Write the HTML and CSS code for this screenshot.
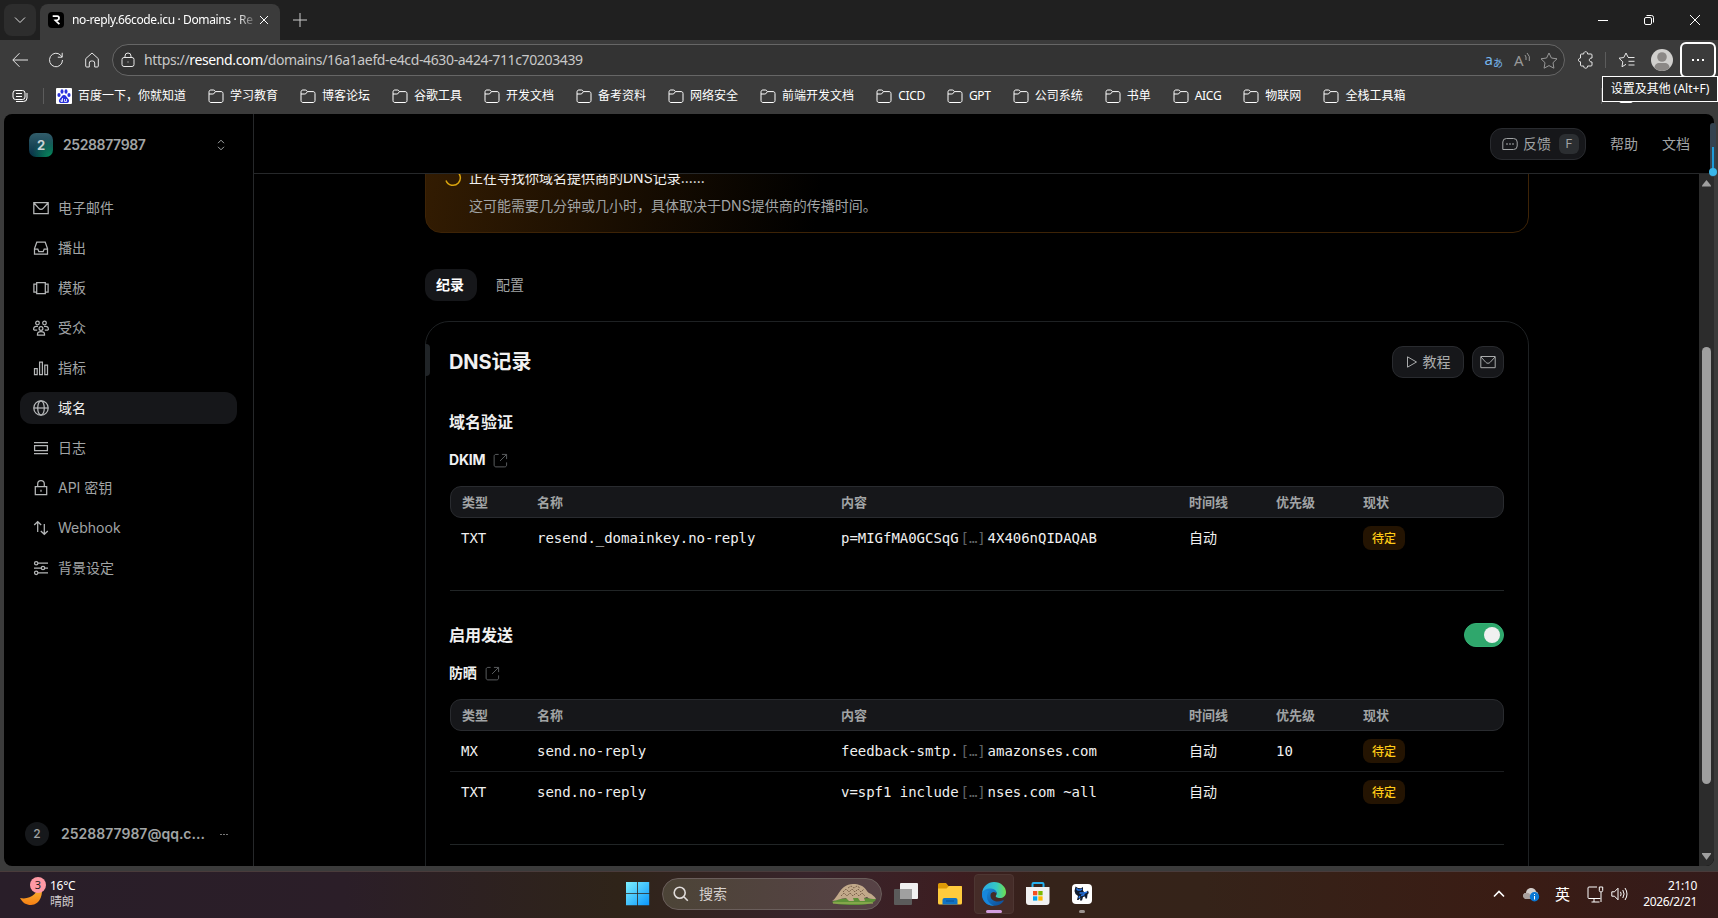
FILE: index.html
```html
<!DOCTYPE html>
<html lang="zh-CN">
<head>
    <meta charset="UTF-8">
    <meta name="viewport" content="width=device-width, initial-scale=1.0">
    <title>no-reply.66code.icu · Domains · Resend</title>
    <link rel="stylesheet" href="styles.css">
</head>
<body>
    <svg class="defs" width="0" height="0">
        <symbol id="folder" viewBox="0 0 16 16"><path d="M1 4.200C1 2.700 1.800 2 3 2h2.400c.8 0 1.200.4 1.600 1l.4.6H13c1.300 0 2 .8 2 2V12.500c0 1.200-.8 2-2 2H3c-1.200 0-2-.8-2-2zM1 6h3.800c.8 0 1.200-.3 1.600-.9l.9-1.400"/></symbol>
        <symbol id="mail" viewBox="0 0 16 16"><path d="M.8 2.500h14.400v11.200H.8zM1 3l4.800 5.300c1.200 1.300 3.200 1.300 4.400 0L15 3"/></symbol>
        <symbol id="external" viewBox="0 0 16 16"><path d="M6 1.500H3.200C2 1.500 1.200 2.300 1.200 3.500v9.300c0 1.200.8 2 2 2h9.300c1.200 0 2-.8 2-2V10M9.500 1.500h5v5M14.300 1.700L7.500 8.500"/></symbol>
    </svg>

    <!-- Browser -->
    <div class="browser">
        <div class="titlebar">
            <div class="tab-menu"><svg width="12" height="12" viewBox="0 0 12 12"><path d="M1 3.500l5 5 5-5"/></svg></div>
            <div class="tab">
                <svg class="favicon" width="16" height="16" viewBox="0 0 16 16"><rect width="16" height="16" rx="4"/><path d="M4.700 4.200h4.500c2.300 0 2.500 3.500.2 3.900l-2 .3 4 3.800"/></svg>
                <span class="tab-title">no-reply.66code.icu · Domains · Re</span>
                <svg width="10" height="10" viewBox="0 0 10 10"><path d="M1 1l8 8M9 1L1 9"/></svg>
            </div>
            <svg class="new-tab" width="14" height="14" viewBox="0 0 14 14"><path d="M7 0v14M0 7h14"/></svg>
            <div class="window-buttons">
                <svg width="10" height="10" viewBox="0 0 10 10"><path d="M0 5.500h10"/></svg>
                <svg width="10" height="10" viewBox="0 0 10 10"><rect x=".5" y="2.500" width="7" height="7" rx="1.500"/><path d="M2.500.5H7.500q2 0 2 2V7.500"/></svg>
                <svg width="10" height="10" viewBox="0 0 10 10"><path d="M0 0l10 10M10 0L0 10"/></svg>
            </div>
        </div>

        <div class="toolbar">
            <svg class="nav-icon" width="16" height="16" viewBox="0 0 16 16"><path d="M16 8H1M7.500 1.200L.8 8l6.700 6.800"/></svg>
            <svg class="nav-icon" width="16" height="16" viewBox="0 0 16 16"><path d="M14.500 8A6.500 6.800 0 1 1 12.600 3.200L14 5M14.200.8V5.200H9.800"/></svg>
            <svg class="nav-icon" width="16" height="16" viewBox="0 0 16 16"><path d="M1.700 6.700L8 1l6.300 5.700V14q0 1-1 1h-2.600v-4q0-2-2-2H7.300q-2 0-2 2v4H2.700q-1 0-1-1z"/></svg>
            <div class="address">
                <svg width="14" height="16" viewBox="0 0 14 16"><rect x="1" y="5.500" width="12" height="9" rx="2"/><path d="M4 5.500V4a3 3 0 0 1 6 0v1.500M7 9.500v1"/></svg>
                <span class="url">https://<b>resend.com</b>/domains/16a1aefd-e4cd-4630-a424-711c70203439</span>
                <span class="translate">a<small>あ</small></span>
                <span class="read-aloud">A<svg width="7" height="10" viewBox="0 0 7 10"><path d="M1 3q1.500 1.500 1 5M3 1q3.500 3 2.300 8"/></svg></span>
                <svg class="star" width="18" height="17" viewBox="0 0 18 17"><path d="M9 1l2.400 5 5.600.8-4 3.900.9 5.500L9 13.600l-4.900 2.600.9-5.500-4-3.900L6.600 6z"/></svg>
            </div>
            <svg class="puzzle" width="16" height="18" viewBox="0 0 16 18"><path d="M3.500 3h2.200C5.300-.1 10 -.1 9.600 3H13q1 0 1 1v3c-3.600-.3-3.600 4.300 0 4v3q0 1-1 1H9.600c.4 3-4.300 3-3.900 0H3.500q-1 0-1-1v-3.200C-.3 11-.3 7.300 2.500 7V4q0-1 1-1z"/></svg>
            <i class="divider"></i>
            <svg class="fav-list" width="17" height="16" viewBox="0 0 17 16"><path d="M8 12.300l-4 2.500.8-5L1 6.200l4.800-.7L8 1l2 4M10 5.500h6.500M10.500 9.300h6M10.500 13h6"/></svg>
            <svg class="profile" width="22" height="22" viewBox="0 0 22 22"><circle cx="11" cy="11" r="11" fill="#d0cfcd"/><circle cx="11" cy="8" r="4.800" fill="#8b8886"/><path d="M3.500 19c0-3.500 2-5 5-5h5c3 0 5 1.500 5 5a11 11 0 0 1-15 0z" fill="#8b8886"/></svg>
            <div class="more"><i></i><i></i><i></i>
                <div class="tooltip">设置及其他 (Alt+F)</div>
            </div>
        </div>

        <div class="bookmarks">
            <svg class="workspaces" width="16" height="14" viewBox="0 0 16 14"><rect x="1" y="1.500" width="12" height="9" rx="2.500"/><path d="M4 4.500h6M4 7.500h6M15 4v5q0 3.500-3.500 3.500H4"/></svg>
            <i class="divider"></i>
            <a class="bookmark"><svg class="baidu" width="16" height="16" viewBox="0 0 16 16"><rect width="16" height="16" rx="1" fill="#fff"/><g fill="#2a32dc"><ellipse cx="3" cy="7" rx="1.600" ry="2.100"/><ellipse cx="6" cy="3.500" rx="1.500" ry="2.200"/><ellipse cx="10" cy="3.500" rx="1.500" ry="2.200"/><ellipse cx="13" cy="7" rx="1.600" ry="2.100"/><path d="M8 7c2 0 2.500 2 4.200 3.700 1.800 2 .6 4.300-1.500 4.300H5.300c-2.100 0-3.300-2.300-1.500-4.300C5.500 9 6 7 8 7z"/></g><path d="M6.500 10v3.500H5V12h1.500M8.500 11v2.500h2V11" fill="none" stroke="#fff" stroke-width=".8"/></svg>百度一下，你就知道</a>
            <a class="bookmark"><svg><use href="#folder"/></svg>学习教育</a>
            <a class="bookmark"><svg><use href="#folder"/></svg>博客论坛</a>
            <a class="bookmark"><svg><use href="#folder"/></svg>谷歌工具</a>
            <a class="bookmark"><svg><use href="#folder"/></svg>开发文档</a>
            <a class="bookmark"><svg><use href="#folder"/></svg>备考资料</a>
            <a class="bookmark"><svg><use href="#folder"/></svg>网络安全</a>
            <a class="bookmark"><svg><use href="#folder"/></svg>前端开发文档</a>
            <a class="bookmark latin"><svg><use href="#folder"/></svg>CICD</a>
            <a class="bookmark latin"><svg><use href="#folder"/></svg>GPT</a>
            <a class="bookmark"><svg><use href="#folder"/></svg>公司系统</a>
            <a class="bookmark"><svg><use href="#folder"/></svg>书单</a>
            <a class="bookmark latin"><svg><use href="#folder"/></svg>AICG</a>
            <a class="bookmark"><svg><use href="#folder"/></svg>物联网</a>
            <a class="bookmark"><svg><use href="#folder"/></svg>全栈工具箱</a>
            <i class="divider last"></i>
            <svg class="other"><use href="#folder"/></svg>
        </div>

        <!-- Resend page -->
        <div class="page">
            <aside class="sidebar">
                <div class="team">
                    <span class="team-logo">2</span>
                    <span class="team-name">2528877987</span>
                    <svg width="8" height="12" viewBox="0 0 8 12"><path d="M1 4.200L4 1.200l3 3M1 7.800l3 3 3-3"/></svg>
                </div>
                <nav class="menu">
                    <a class="menu-item"><svg><use href="#mail"/></svg>电子邮件</a>
                    <a class="menu-item"><svg viewBox="0 0 16 16"><path d="M3.800 2.200h8.400l2.300 6.300v5.700h-13V8.500zM1.500 9h3.300l1 2.500h4.400l1-2.500h3.300"/></svg>播出</a>
                    <a class="menu-item"><svg viewBox="0 0 16 16"><path d="M3.700 2.500h8.600v11.200H3.700zM3.500 4H.9v8.200h2.600M12.500 4h2.600v8.200h-2.600"/></svg>模板</a>
                    <a class="menu-item"><svg viewBox="0 0 16 16"><circle cx="4.500" cy="3" r="1.800"/><circle cx="11.500" cy="3" r="1.800"/><circle cx="8" cy="8.500" r="1.900"/><path d="M4.500 15v-1c0-3.300 7-3.300 7 0v1zM.7 10V8.500C.7 6.500 3 6 5 6.500M15.300 10V8.500c0-2-2.300-2.500-4.300-2M.7 10h3.500M15.300 10h-3.500"/></svg>受众</a>
                    <a class="menu-item"><svg viewBox="0 0 16 16"><path d="M1.500 8.500h2.700v6H1.500zM6.600 2.200h2.800v12.300H6.600zM11.800 5.200h2.700v9.300h-2.700z"/></svg>指标</a>
                    <a class="menu-item active"><svg viewBox="0 0 16 16"><circle cx="8" cy="8" r="7.200"/><ellipse cx="8" cy="8" rx="3.300" ry="7.200"/><path d="M.8 8h14.400"/></svg>域名</a>
                    <a class="menu-item"><svg viewBox="0 0 16 16"><path d="M1 2.500h14M1 13.500h14M1.600 5.500h12.800v5H1.600z"/></svg>日志</a>
                    <a class="menu-item"><svg viewBox="0 0 16 16"><path d="M2.300 6.700h11.400v8H2.300zM4.700 6.500V4a3.300 3.300 0 0 1 6.600 0v2.500M8 9.700v2"/></svg>API 密钥</a>
                    <a class="menu-item"><svg viewBox="0 0 16 16"><path d="M4.700 12V1.800M1.200 5l3.500-3.300L8.200 5M11.300 4v10M7.800 11l3.500 3.300 3.500-3.300"/></svg>Webhook</a>
                    <a class="menu-item"><svg viewBox="0 0 16 16"><circle cx="3.200" cy="3.200" r="1.700"/><circle cx="10" cy="8" r="1.700"/><circle cx="3.200" cy="12.800" r="1.700"/><path d="M5 3.200h10M1 8h7.200M12 8h3M5 12.800h10"/></svg>背景设定</a>
                </nav>
                <div class="account">
                    <span class="account-logo">2</span>
                    <span class="account-name">2528877987@qq.c...</span>
                    <span class="account-more"><i></i><i></i><i></i></span>
                </div>
            </aside>

            <div class="main">
                <header class="topbar">
                    <button class="feedback">
                        <svg width="16" height="16" viewBox="0 0 16 16"><path d="M4.500 2.500h7Q15.200 2.500 15.200 6v4q0 3.500-3.700 3.500H.8V6q0-3.500 3.700-3.500z"/><path d="M4.300 8h1.400M7.300 8h1.400M10.300 8h1.400" stroke-width="1.600"/></svg>
                        反馈<kbd>F</kbd>
                    </button>
                    <a>帮助</a>
                    <a>文档</a>
                </header>

                <div class="scroll">
                    <div class="content">
                        <div class="banner">
                            <svg class="spinner" width="18" height="18" viewBox="0 0 18 18"><path d="M11 1.800A7.400 7.400 0 1 1 2 11.500"/></svg>
                            <div>
                                <div class="banner-title">正在寻找你域名提供商的DNS记录......</div>
                                <div class="banner-text">这可能需要几分钟或几小时，具体取决于DNS提供商的传播时间。</div>
                            </div>
                        </div>

                        <div class="tabs">
                            <span class="tab-pill selected">纪录</span>
                            <span class="tab-pill">配置</span>
                        </div>

                        <section class="card">
                            <i class="accent"></i>
                            <div class="card-head">
                                <h2>DNS记录</h2>
                                <button class="btn"><svg width="12" height="14" viewBox="0 0 12 14"><path d="M1.500 1.800L10.500 7l-9 5.200z"/></svg>教程</button>
                                <button class="btn square"><svg width="16" height="16"><use href="#mail"/></svg></button>
                            </div>

                            <div class="section-head"><h3>域名验证</h3></div>
                            <h4>DKIM<svg><use href="#external"/></svg></h4>
                            <div class="row head"><span>类型</span><span>名称</span><span>内容</span><span>时间线</span><span>优先级</span><span>现状</span></div>
                            <div class="row">
                                <span>TXT</span><span>resend._domainkey.no-reply</span>
                                <span>p=MIGfMA0GCSqG<em>[…]</em>4X406nQIDAQAB</span>
                                <span>自动</span><span></span><span><b class="badge">待定</b></span>
                            </div>
                            <hr>

                            <div class="section-head"><h3>启用发送</h3><span class="toggle"><i></i></span></div>
                            <h4>防晒<svg><use href="#external"/></svg></h4>
                            <div class="row head"><span>类型</span><span>名称</span><span>内容</span><span>时间线</span><span>优先级</span><span>现状</span></div>
                            <div class="row line">
                                <span>MX</span><span>send.no-reply</span>
                                <span>feedback-smtp.<em>[…]</em>amazonses.com</span>
                                <span>自动</span><span>10</span><span><b class="badge">待定</b></span>
                            </div>
                            <div class="row">
                                <span>TXT</span><span>send.no-reply</span>
                                <span>v=spf1 include<em>[…]</em>nses.com ~all</span>
                                <span>自动</span><span></span><span><b class="badge">待定</b></span>
                            </div>
                            <hr>
                        </section>
                    </div>

                    <div class="scrollbar">
                        <svg width="9" height="7" viewBox="0 0 9 7"><path d="M4.500 0L9 5.500v1H0v-1z"/></svg>
                        <i class="thumb"></i>
                        <svg width="9" height="7" viewBox="0 0 9 7"><path d="M4.500 7L9 1V0H0v1z"/></svg>
                    </div>
                </div>
            </div>
            <div class="slider"><i></i><b></b></div>
        </div>
    </div>

    <!-- Taskbar -->
    <div class="taskbar">
        <div class="weather">
            <svg width="28" height="30" viewBox="0 0 28 30"><defs><linearGradient id="moon" x1="0" y1="0" x2="0" y2="1"><stop offset="0" stop-color="#fbc53a"/><stop offset="1" stop-color="#f58014"/></linearGradient></defs><path d="M20 6c5 10 0 22-9 22-5 0-8-2-11-7 10 2 18-4 20-15z" fill="url(#moon)"/><circle cx="18" cy="8" r="8" fill="#ff99a4"/><text x="18" y="12" text-anchor="middle">3</text></svg>
            <div>16°C<br><span>晴朗</span></div>
        </div>

        <div class="apps">
            <svg class="start" width="24" height="24" viewBox="0 0 24 24"><defs><linearGradient id="win" x1="0" y1="0" x2="1" y2="1"><stop offset="0" stop-color="#7df0ff"/><stop offset="1" stop-color="#0a96fb"/></linearGradient></defs><path d="M0 0h11.200v11.200H0zM12 0h11.200v11.200H12zM0 12h11.200v11.200H0zM12 12h11.200v11.200H12z" fill="url(#win)"/></svg>
            <div class="search">
                <svg width="16" height="16" viewBox="0 0 16 16"><circle cx="6.700" cy="6.700" r="5.500"/><path d="M10.800 10.800l4 4"/></svg>
                <span>搜索</span>
                <svg class="pangolin" width="46" height="22" viewBox="0 0 46 22"><path d="M1 19q6-4 22-4t22 1q-2 6-22 6T1 19z" fill="#5e9138"/><path d="M2 20h40" stroke="#a8bd5c"/><path d="M1 18C8 14 8 2 22 1c12 0 13 7 16 9 3 1 6 4 7 6-4 0-7 0-9-2l-3 1 1 3h-5l-2-3h-5l1 3h-5l-3-3c-5 0-9 3-14 3z" fill="#c2a98a"/><path d="M10 13l3-3 3 3 3-3 3 3 3-3 3 3 3-3 3 3M12 9l3-3 3 3 3-3 3 3 3-3 3 3 3-3M17 5l3-2 3 2 3-2 3 2" fill="none" stroke="#7b624b" stroke-dasharray="2 1"/></svg>
            </div>
            <svg class="taskview" width="24" height="22" viewBox="0 0 24 22"><rect x="6" width="18" height="16" rx="1" fill="#f0f0f0"/><rect y="6" width="18" height="16" rx="1" fill="#5b5b5b"/><path d="M6 6h12v10H6z" fill="#a0a0a0"/></svg>
            <svg class="explorer" width="24" height="22" viewBox="0 0 24 22"><path d="M0 1.500Q0 0 1.500 0H8l2.500 3H23q1 0 1 1v5H0z" fill="#dd9a07"/><path d="M0 5.500h8.500L11 3h12q1 0 1 1v16q0 1.500-1.500 1.500h-21Q0 21.500 0 20z" fill="#ffcb3d"/><path d="M4.500 21.500V17q0-2 2-2h11q2 0 2 2v4.500z" fill="#1173c4"/><path d="M8 18h8" stroke="#0b4f90"/></svg>
            <div class="app-tile">
                <svg width="24" height="24" viewBox="0 0 24 24">
                    <defs>
                        <linearGradient id="edge1" x1="0" y1="0" x2="1" y2="0"><stop offset="0" stop-color="#2aa9e8"/><stop offset=".6" stop-color="#35c8c3"/><stop offset="1" stop-color="#6fe04e"/></linearGradient>
                        <linearGradient id="edge2" x1="0" y1="0" x2="1" y2="1"><stop offset="0" stop-color="#1b8fe0"/><stop offset="1" stop-color="#0c4b96"/></linearGradient>
                    </defs>
                    <path d="M0 11C1 4 6 0 12 0c7 0 12 5 12 10 0 4-3 6-6 6s-5-1-4-2.500c2-2.500 0-5.500-4-5.500-4.500 0-8 1-10 3z" fill="url(#edge1)"/>
                    <path d="M0 11C2 7 6 6 9 6.500c4 .3 6 3 5.500 5.500C14 9.500 9 9 8.500 13c-.3 5 5 8 12 5.500 1-.5 1.500 0 1 .7C16 27 0 25 0 12z" fill="url(#edge2)"/>
                    <path d="M7 9c-4 5-2 12 5 14.800C4 24 0 18 0 12c0-3 4-4 7-3z" fill="#1787dc"/>
                </svg>
            </div>
            <svg class="store" width="24" height="24" viewBox="0 0 24 24"><path d="M6.500 6V2q0-1 1-1h9q1 0 1 1v4" fill="none" stroke="#25b0ee" stroke-width="2"/><path d="M0 5h23.500v15q0 3-3 3H3q-3 0-3-3z" fill="#f1f1f1"/><path d="M7 9h4.300v4.300H7z" fill="#f25022"/><path d="M12.300 9h4.300v4.300h-4.300z" fill="#7fba00"/><path d="M7 14.300h4.300v4.300H7z" fill="#00a4ef"/><path d="M12.300 14.300h4.300v4.300h-4.300z" fill="#ffb900"/></svg>
            <div class="game">
                <svg width="20" height="20" viewBox="0 0 20 20"><rect width="20" height="20" rx="4" fill="#fff"/><path d="M3.500 2.500L6 4l3 .2L11 3v3.500l1 1.500h2.500L16 6.500l.8 2.500-1.300 1.500-.5 4h-1.500l-.5-2-2 .5-1 3.500H8l.3-2.500L6.500 16H5l1-4-2.500-2-1-3z" fill="#101b2f"/><path d="M4.500 4.500L6 6h2.500l1.500-1M7.500 9h5l2.500-1M9 11.500l3.500-1M7 14l.8-2" stroke="#2878e8" stroke-width="1.500" fill="none"/></svg>
            </div>
        </div>

        <div class="tray">
            <svg class="chevron" width="12" height="8" viewBox="0 0 12 8"><path d="M1 6.500L6 1.500l5 5"/></svg>
            <svg class="cloud" width="17" height="15" viewBox="0 0 17 15"><path d="M3 12C-1 11-.5 6 3 6c0-6 9-7 10-1.500 2 .5 2.500 2.500 2 4L8 12z" fill="#d2cdca"/><path d="M3 6c4-1 5 3 5 6H3C-1 11-.5 6 3 6z" fill="#aaa19e"/><circle cx="11.500" cy="9.800" r="4.700" fill="#0a78d4"/><path d="M11.500 9v3.500M11.500 7v1" stroke="#fff"/></svg>
            <span class="ime">英</span>
            <svg width="17" height="17" viewBox="0 0 17 17"><path d="M10 1H2Q1 1 1 2v9.500q0 1 1 1h11.500M7 12.500V16M4.500 16h8M12.300 1h3.400v3.500q0 1.200-1 1.200h-1.400q-1 0-1-1.200zM14 6v10"/></svg>
            <svg class="sound" width="17" height="14" viewBox="0 0 17 14"><path d="M.8 4.800H3.500L7 1.200v11.600L3.500 9.200H.8zM9.500 4.800q1.300 2.200 0 4.400M11.800 3q2.600 4 0 8M14 1q4 6 0 12"/></svg>
            <div class="clock">21:10<br>2026/2/21</div>
        </div>
    </div>
</body>
</html>
```
FILE: styles.css
```css
* {
    box-sizing: border-box;
}

body {
    margin: 0;
    height: 918px;
    overflow: hidden;
    background-color: #000;
    color: #fff;
    font-family: "Noto Sans", "Noto Sans CJK SC", sans-serif;
    font-size: 12px;
    line-height: 16px;
}

svg {
    display: block;
    flex: none;
    fill: none;
    stroke: currentColor;
}

button {
    font: inherit;
    margin: 0;
}

.defs {
    position: absolute;
}

.divider {
    width: 1px;
    height: 16px;
    background-color: #5c5c5c;
}

/* Browser */
.browser {
    height: 871px;
    background-color: #3b3b3b;
}

.titlebar {
    height: 40px;
    padding: 4px 18px 0 4px;
    display: flex;
    background-color: #202020;
}

.tab-menu {
    width: 32px;
    height: 32px;
    margin-right: 4px;
    border-radius: 8px;
    background-color: #2d2d2d;
    color: #ddd;
    display: flex;
    align-items: center;
    justify-content: center;
}

.tab {
    width: 240px;
    padding: 0 11px 4px 8px;
    border-radius: 8px 8px 0 0;
    background-color: #3b3b3b;
    display: flex;
    align-items: center;
}

.favicon rect {
    fill: #000;
    stroke: none;
}

.favicon path {
    stroke-width: 1.8;
}

.tab-title {
    flex: 1;
    margin: 0 5px 0 8px;
    white-space: nowrap;
    letter-spacing: -0.37px;
    mask-image: linear-gradient(to right, #000 165px, transparent 186px);
}

.new-tab {
    margin: 9px 0 0 13px;
    color: #ccc;
}

.window-buttons {
    margin: 11px 0 0 auto;
    display: flex;
    gap: 36px;
}

.toolbar {
    height: 40px;
    padding: 0 2px 0 12px;
    display: flex;
    align-items: center;
    color: #e6e6e6;
}

.nav-icon {
    margin-right: 20px;
}

.nav-icon:nth-child(3) {
    margin-right: 12px;
}

.address {
    width: 1453px;
    height: 32px;
    padding: 0 6px 0 8px;
    border: 1px solid #666;
    border-radius: 16px;
    background-color: #333;
    display: flex;
    align-items: center;
}

.url {
    flex: 1;
    margin-left: 9px;
    font-size: 14px;
    color: #c8c8c8;
    letter-spacing: -0.37px;
}

.url b {
    font-weight: normal;
    color: #fff;
}

.translate {
    color: #75b5ec;
    font-size: 15px;
    margin-right: 11px;
    white-space: nowrap;
}

.translate small {
    font-size: 10px;
    position: relative;
    top: 2px;
}

.read-aloud {
    display: flex;
    width: 16px;
    margin-right: 10px;
    font-size: 15px;
    color: #989898;
}

.star {
    color: #989898;
}

.puzzle {
    margin: 0 11px 0 13px;
}

.fav-list {
    margin: 0 16px 0 12px;
}

.profile {
    stroke: none;
}

.more {
    width: 36px;
    height: 36px;
    margin-left: auto;
    border: 2px solid #fff;
    border-radius: 6px;
    display: flex;
    align-items: center;
    justify-content: center;
    gap: 3px;
    position: relative;
}

.more > i {
    width: 2px;
    height: 2px;
    background-color: #fff;
}

.tooltip {
    position: absolute;
    top: 32px;
    right: -4px;
    width: 116px;
    height: 26px;
    border: 1px solid #fff;
    background-color: #2b2b2b;
    line-height: 24px;
    text-align: center;
    white-space: nowrap;
    color: #fff;
    z-index: 2;
}

.bookmarks {
    height: 34px;
    padding: 0 84px 3px 12px;
    display: flex;
    align-items: center;
}

.bookmarks .divider {
    margin: 0 12px 0 15px;
}

.bookmark {
    display: flex;
    align-items: center;
    gap: 6px;
    margin-right: 22px;
    white-space: nowrap;
}

.bookmark.latin {
    letter-spacing: -0.3px;
}

.bookmark svg {
    width: 16px;
    height: 16px;
}

.bookmark .baidu {
    stroke: none;
}

.bookmarks .last {
    margin: 0 16px 0 auto;
}

.other {
    width: 16px;
    height: 16px;
}

/* Page frame */
.page {
    width: 1710px;
    height: 752px;
    margin-left: 4px;
    border-radius: 8px;
    background-color: #000;
    display: flex;
    position: relative;
    color: #a1a4a5;
    font-family: Inter, "Noto Sans CJK SC", sans-serif;
    font-size: 14px;
    line-height: 20px;
}

.sidebar {
    width: 250px;
    padding: 19px 16px 20px;
    border-right: 1px solid #26282a;
    display: flex;
    flex-direction: column;
}

.team {
    height: 24px;
    padding: 0 12px 0 9px;
    display: flex;
    align-items: center;
}

.team-logo {
    width: 24px;
    height: 24px;
    margin-right: 10px;
    border-radius: 7px;
    background: radial-gradient(circle at 90% 100%, #078b5c, transparent 60%), linear-gradient(#315d6a, #052f45);
    color: #c9d3d6;
    font-size: 13px;
    font-weight: 700;
    line-height: 24px;
    text-align: center;
}

.team-name {
    flex: 1;
    font-weight: 600;
    letter-spacing: -0.4px;
}

.menu {
    margin-top: 35px;
    display: flex;
    flex-direction: column;
    gap: 8px;
}

.menu-item {
    width: 217px;
    height: 32px;
    padding-left: 13px;
    border-radius: 12px;
    display: flex;
    align-items: center;
    gap: 9px;
}

.menu-item svg {
    width: 16px;
    height: 16px;
    color: #b5b7b8;
    stroke-width: 1.25;
}

.menu-item.active {
    background-color: #16171a;
    color: #f0f0f0;
}

.account {
    height: 24px;
    margin-top: auto;
    padding: 0 9px 0 5px;
    display: flex;
    align-items: center;
}

.account-logo {
    width: 24px;
    height: 24px;
    margin-right: 12px;
    border-radius: 50%;
    background-color: #16181b;
    font-size: 12px;
    font-weight: 500;
    line-height: 24px;
    text-align: center;
}

.account-name {
    flex: 1;
    font-weight: 600;
    white-space: nowrap;
}

.account-more {
    display: flex;
    gap: 1px;
}

.account-more i {
    width: 2px;
    height: 1px;
    background-color: #777;
}

.main {
    flex: 1;
    display: flex;
    flex-direction: column;
}

.topbar {
    height: 60px;
    padding-right: 24px;
    border-bottom: 1px solid #26282a;
    display: flex;
    align-items: center;
    justify-content: flex-end;
    gap: 24px;
}

.feedback {
    width: 96px;
    height: 32px;
    padding: 0 0 0 11px;
    border: 1px solid #292b2f;
    border-radius: 12px;
    background-color: #16171a;
    color: inherit;
    display: flex;
    align-items: center;
    gap: 5px;
}

.feedback kbd {
    width: 20px;
    height: 20px;
    margin-left: 3px;
    border-radius: 6px;
    background-color: #2b2e31;
    font: 12px/20px Inter, sans-serif;
    text-align: center;
}

.scroll {
    height: 692px;
    overflow: hidden;
    display: flex;
    justify-content: space-between;
    border-bottom-right-radius: 8px;
}

.content {
    width: 1104px;
    margin-left: 171px;
}

/* DNS lookup notice */
.banner {
    height: 86px;
    margin-top: -27px;
    padding: 18px 0 0 18px;
    border: 1px solid #3d2306;
    border-radius: 16px;
    background: linear-gradient(100deg, #331c02, #000 36%);
    display: flex;
    gap: 7px;
}

.spinner {
    margin-top: 3px;
    color: #d9a40e;
    stroke-width: 1.5;
}

.banner-title {
    height: 30px;
    line-height: 24px;
    color: #f0f0f0;
}

.tabs {
    margin-top: 36px;
    display: flex;
    gap: 7px;
}

.tab-pill {
    height: 32px;
    padding: 0 12px;
    border-radius: 12px;
    line-height: 32px;
}

.tab-pill.selected {
    padding: 0 0 0 11px;
    width: 52px;
    background-color: #16171a;
    color: #fff;
    font-weight: 600;
}

.card {
    height: 620px;
    margin-top: 20px;
    padding: 24px 24px 0;
    border: 1px solid #1e2123;
    border-radius: 24px;
    position: relative;
    color: #f0f0f0;
}

.accent {
    position: absolute;
    left: -1px;
    top: 22px;
    width: 5px;
    height: 32px;
    border-radius: 0 4px 4px 0;
    background-color: #202427;
}

.card-head {
    display: flex;
    align-items: center;
    gap: 8px;
}

h2 {
    flex: 1;
    margin: 0 0 0 -1px;
    font-size: 20px;
    line-height: 32px;
    letter-spacing: -0.1px;
}

.btn {
    width: 72px;
    height: 32px;
    padding: 0;
    border: 1px solid #292b2f;
    border-radius: 11px;
    background-color: #16171a;
    color: #a9abac;
    display: flex;
    align-items: center;
    justify-content: center;
    gap: 5px;
}

.btn.square {
    width: 32px;
}

.section-head {
    height: 24px;
    margin-top: 32px;
    display: flex;
    align-items: center;
    justify-content: space-between;
}

h3 {
    margin: 0 0 0 -1px;
    font-size: 16px;
}

h4 {
    height: 20px;
    margin: 16px 0 16px -1px;
    font-size: 14px;
    letter-spacing: -0.2px;
    display: flex;
    align-items: center;
    gap: 8px;
}

h4 svg {
    width: 15px;
    height: 15px;
    color: #5e6163;
}

/* DNS records */
.row {
    height: 40px;
    padding-left: 11px;
    display: grid;
    grid-template-columns: 76px 304px 348px 87px 87px 1fr;
    align-items: center;
    font-family: "DejaVu Sans Mono", "Noto Sans CJK SC", monospace;
    letter-spacing: -0.03px;
    white-space: pre;
}

.row.head {
    height: 32px;
    padding-left: 11px;
    grid-template-columns: 75px 304px 348px 87px 87px 1fr;
    border: 1px solid #292b2f;
    border-radius: 11px;
    background-color: #16171a;
    color: #a1a4a5;
    font-family: "Noto Sans CJK SC", sans-serif;
    font-size: 13px;
    font-weight: 600;
    line-height: 18px;
    padding-bottom: 1px;
}

.row.line {
    height: 41px;
    border-bottom: 1px solid #1b1d1f;
}

.row em {
    display: inline-block;
    width: 29px;
    text-align: center;
    font-style: normal;
    color: #606467;
}

.badge {
    display: block;
    width: 42px;
    height: 24px;
    border-radius: 8px;
    background-color: #241402;
    color: #ffca16;
    font: 500 12px/24px "Noto Sans CJK SC", sans-serif;
    text-align: center;
}

hr {
    height: 1px;
    margin: 32px 0 0;
    border: none;
    background-color: #212526;
}

.toggle {
    width: 40px;
    height: 24px;
    padding: 3px;
    border: 1px solid #33b074;
    border-radius: 12px;
    background-color: #2fa76c;
    display: flex;
    justify-content: flex-end;
}

.toggle i {
    width: 16px;
    height: 16px;
    border-radius: 50%;
    background-color: #f0f0f0;
}

.scrollbar {
    width: 15px;
    padding: 6px 0;
    background-color: #2c2c2c;
    display: flex;
    flex-direction: column;
    align-items: center;
    justify-content: space-between;
}

.scrollbar svg {
    fill: #9f9f9f;
    stroke: none;
}

.thumb {
    width: 9px;
    height: 437px;
    margin-top: 91px;
    border-radius: 5px;
    background-color: #9f9f9f;
}

/* Vertical slider over the right edge */
.slider {
    position: absolute;
    right: -2px;
    top: 9px;
    width: 6px;
    height: 54px;
    border-radius: 3px;
    background-color: #34424f;
}

.slider i {
    position: absolute;
    left: 2px;
    bottom: 4px;
    width: 2px;
    height: 26px;
    background-color: #1d9bd8;
}

.slider b {
    position: absolute;
    left: -1px;
    bottom: 1px;
    width: 8px;
    height: 8px;
    border-radius: 50%;
    background-color: #38b6ea;
}

/* Taskbar */
.taskbar {
    height: 47px;
    border-top: 1px solid #493b3b;
    padding: 0 21px 2px 20px;
    background: linear-gradient(90deg, #291e29, #2b1e28 20%, #2f2419 36%, #38242b 47%, #3d1d20 56%, #35231a 61%, #352319 70%, #3a1c14 88%, #341b1b);
    display: grid;
    grid-template-columns: 606px 1fr auto;
    align-items: center;
}

.weather {
    display: flex;
    align-items: center;
    gap: 2px;
}

.weather svg {
    stroke: none;
    margin-top: -4px;
}

.weather text {
    fill: #222;
    font-size: 11px;
}

.weather div {
    letter-spacing: -0.3px;
}

.weather span {
    color: #cfcacc;
}

.apps {
    display: flex;
    align-items: center;
}

.apps svg {
    stroke: none;
}

.search {
    width: 220px;
    height: 32px;
    margin: 0 12px;
    padding: 0 4px 0 10px;
    border: 1px solid #6a5e5b;
    border-radius: 16px;
    background: linear-gradient(90deg, #4c4437, #574246);
    display: flex;
    align-items: center;
    gap: 10px;
    font-size: 14px;
    color: #d5d0cd;
}

.search svg:first-child {
    stroke: #e0dcda;
    stroke-width: 1.6;
}

.pangolin {
    margin-left: auto;
}

.explorer {
    margin: 0 12px 0 20px;
}

.app-tile {
    width: 40px;
    height: 40px;
    margin-right: 12px;
    border: 1px solid #4d3632;
    border-radius: 4px;
    background-color: #452c28;
    display: flex;
    flex-direction: column;
    align-items: center;
    padding-top: 7px;
}

.app-tile::after {
    content: "";
    width: 16px;
    height: 3px;
    margin-top: 4px;
    border-radius: 2px;
    background-color: #d49ee0;
}

.game {
    margin-left: 22px;
    padding-top: 9px;
}

.game::after {
    content: "";
    display: block;
    width: 6px;
    height: 3px;
    margin: 6px auto 0;
    border-radius: 2px;
    background-color: #9b938f;
}

.tray {
    display: flex;
    align-items: center;
}

.chevron {
    stroke-width: 1.6;
}

.cloud {
    margin: 0 15px 0 18px;
    stroke: none;
}

.ime {
    font-size: 15px;
    margin-right: 17px;
}

.sound {
    margin-left: 7px;
}

.clock {
    width: 69px;
    text-align: right;
    letter-spacing: -0.35px;
}
```
